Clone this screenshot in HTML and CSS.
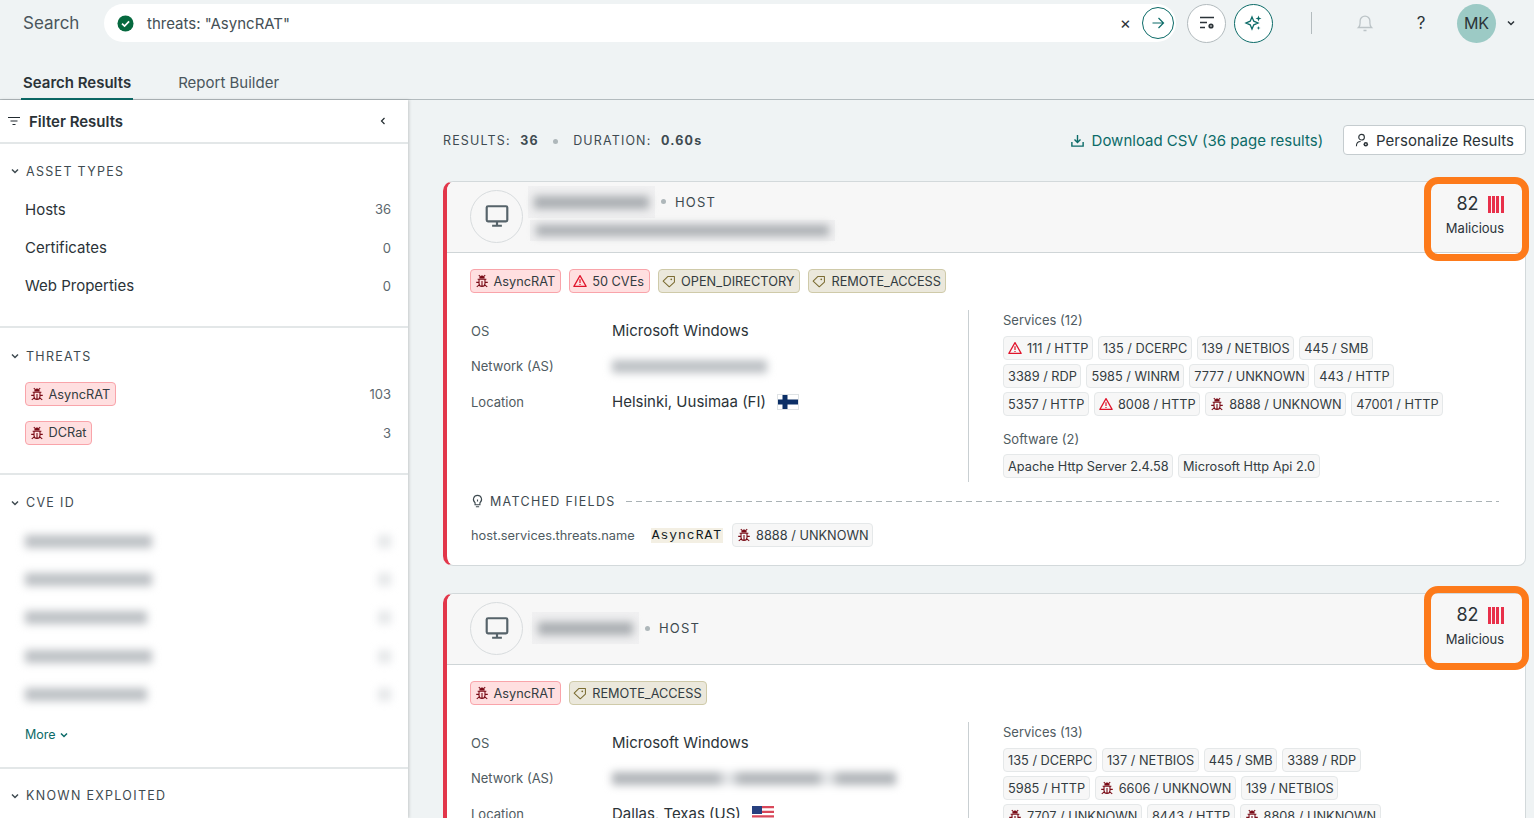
FILE: index.html
```html
<!DOCTYPE html>
<html lang="en">
<head>
  <meta charset="UTF-8">
  <title>Search Results</title>
  <link rel="stylesheet" href="styles.css">
</head>
<body>

  <!-- Shared icons -->
  <svg class="sprite" xmlns="http://www.w3.org/2000/svg">
    <symbol id="bug" viewBox="0 0 16 16">
      <path d="M5.3 4.8a2.7 2.7 0 0 1 5.4 0z" fill="currentColor" stroke="currentColor" stroke-width=".8"/>
      <path d="M3 6h10M4.6 6v4.8a3.4 3.4 0 0 0 6.8 0V6M8 8v6M5.6 2.8 4.4 1.4M10.4 2.8l1.2-1.4M1.4 9.6h3.2M14.6 9.6h-3.2M2 14.8l2.9-2.4M14 14.8l-2.9-2.4" fill="none" stroke="currentColor" stroke-width="1.25"/>
    </symbol>
    <symbol id="warn" viewBox="0 0 16 16">
      <path d="M8 1.8 15 14.2H1z" fill="none" stroke="currentColor" stroke-width="1.4" stroke-linejoin="round"/>
      <path d="M8 6v4.2M8 11.3v1.4" fill="none" stroke="currentColor" stroke-width="1.4"/>
    </symbol>
    <symbol id="tag" viewBox="0 0 16 16">
      <path d="M1.3 8.2 6.8 2.8h7.4v6.4l-5.9 5.4z" fill="none" stroke="currentColor" stroke-width="1.2" stroke-linejoin="round"/>
      <circle cx="10.6" cy="6" r="1" fill="currentColor"/>
    </symbol>
    <symbol id="monitor" viewBox="0 0 24 24">
      <rect x="2.5" y="3" width="19" height="14" rx="1.2" fill="none" stroke="currentColor" stroke-width="2"/>
      <path d="M12 17v4M7.5 21h9" fill="none" stroke="currentColor" stroke-width="2"/>
    </symbol>
    <symbol id="chev" viewBox="0 0 10 10">
      <path d="M2 3.5 5 6.5 8 3.5" fill="none" stroke="currentColor" stroke-width="1.5"/>
    </symbol>
  </svg>

  <header class="topbar">
    <div class="search-row">
      <span class="search-label">Search</span>
      <div class="search-box">
        <svg class="check" viewBox="0 0 18 18"><circle cx="9" cy="9" r="8.5" fill="#06693f"/><path d="M5.3 9.2 8 11.8l4.8-5" fill="none" stroke="#fff" stroke-width="1.8"/></svg>
        <span class="query">threats: "AsyncRAT"</span>
        <span class="clear">×</span>
        <span class="go-btn">
          <svg width="16" height="16" viewBox="0 0 16 16"><path d="M2.5 8h11M8.5 3l5 5-5 5" fill="none" stroke="currentColor" stroke-width="1.2"/></svg>
        </span>
      </div>
      <span class="round-btn grey">
        <svg width="20" height="20" viewBox="0 0 20 20"><path d="M3 4.5h14M3 9.5h7M3 14.5h5" fill="none" stroke="#2b3338" stroke-width="1.3"/><circle cx="14" cy="13" r="2.6" fill="#2b3338"/><circle cx="14" cy="13" r="0.8" fill="#fff"/></svg>
      </span>
      <span class="round-btn teal">
        <svg width="20" height="20" viewBox="0 0 20 20" fill="none" stroke="#0c6b68" stroke-width="1.3"><path d="M8 5.5 9.8 9.7 14 11.5 9.8 13.3 8 17.5 6.2 13.3 2 11.5 6.2 9.7z" transform="translate(0 -1.5)"/><path d="M14.5 2.5 15.3 4.7 17.5 5.5 15.3 6.3 14.5 8.5 13.7 6.3 11.5 5.5 13.7 4.7zM14.5 13 15 14.5 16.5 15 15 15.5 14.5 17 14 15.5 12.5 15 14 14.5z" fill="#0c6b68" stroke="none"/></svg>
      </span>
      <span class="top-divider"></span>
      <svg class="bell" width="18" height="20" viewBox="0 0 18 20"><path d="M2.5 14.5c1.2-1 1.6-2.2 1.6-4.5V8a4.9 4.9 0 0 1 9.8 0v2c0 2.3.4 3.5 1.6 4.5zM7.5 17.5h3" fill="none" stroke="#bcc4c7" stroke-width="1.3"/></svg>
      <span class="help">?</span>
      <span class="avatar">MK</span>
      <svg class="avatar-chev" width="10" height="10"><use href="#chev"/></svg>
    </div>
    <nav class="tabs">
      <a class="tab active">Search Results</a>
      <a class="tab">Report Builder</a>
    </nav>
  </header>

  <div class="layout">
    <!-- Filters -->
    <aside class="sidebar">
      <div class="filter-head">
        <svg width="12" height="10" viewBox="0 0 12 10"><path d="M0 1.5h12M2.5 5h7M4.5 8.5h3" fill="none" stroke="#222b30" stroke-width="1.2"/></svg>
        <strong>Filter Results</strong>
        <svg class="collapse" width="10" height="10" viewBox="0 0 10 10"><path d="M6.5 2 3.5 5l3 3" fill="none" stroke="#222b30" stroke-width="1.2"/></svg>
      </div>

      <section class="filter-group">
        <h4><svg width="10" height="10"><use href="#chev"/></svg>ASSET TYPES</h4>
        <div class="filter-row"><span>Hosts</span><span class="count">36</span></div>
        <div class="filter-row"><span>Certificates</span><span class="count">0</span></div>
        <div class="filter-row"><span>Web Properties</span><span class="count">0</span></div>
      </section>

      <section class="filter-group">
        <h4><svg width="10" height="10"><use href="#chev"/></svg>THREATS</h4>
        <div class="filter-row"><span class="tag red"><svg class="ico bug-ico"><use href="#bug"/></svg>AsyncRAT</span><span class="count">103</span></div>
        <div class="filter-row"><span class="tag red"><svg class="ico bug-ico"><use href="#bug"/></svg>DCRat</span><span class="count">3</span></div>
      </section>

      <section class="filter-group cve">
        <h4><svg width="10" height="10"><use href="#chev"/></svg>CVE ID</h4>
        <div class="filter-row"><span class="smudge w1"></span><span class="smudge faint"></span></div>
        <div class="filter-row"><span class="smudge w1"></span><span class="smudge faint"></span></div>
        <div class="filter-row"><span class="smudge w2"></span><span class="smudge faint"></span></div>
        <div class="filter-row"><span class="smudge w1"></span><span class="smudge faint"></span></div>
        <div class="filter-row"><span class="smudge w2"></span><span class="smudge faint"></span></div>
        <a class="more">More <svg width="10" height="10"><use href="#chev"/></svg></a>
      </section>

      <section class="filter-group">
        <h4><svg width="10" height="10"><use href="#chev"/></svg>KNOWN EXPLOITED</h4>
      </section>
    </aside>

    <main class="results">
      <div class="results-bar">
        <div class="stats">
          RESULTS: <b>36</b> <i class="dot"></i> DURATION: <b>0.60s</b>
        </div>
        <a class="download">
          <svg width="15" height="15" viewBox="0 0 16 16"><path d="M8 2v8M4.8 7 8 10.2 11.2 7M2 9.5V14h12V9.5" fill="none" stroke="currentColor" stroke-width="1.5"/></svg>
          Download CSV (36 page results)
        </a>
        <span class="personalize">
          <svg width="15" height="15" viewBox="0 0 16 16"><circle cx="7" cy="4.5" r="3" fill="none" stroke="#2b3338" stroke-width="1.2"/><path d="M1.5 14c0-3 2-5 4.5-5" fill="none" stroke="#2b3338" stroke-width="1.2"/><circle cx="11.5" cy="12" r="2.4" fill="#2b3338"/><circle cx="11.5" cy="12" r=".8" fill="#fff"/></svg>
          Personalize Results
        </span>
      </div>

      <!-- First host -->
      <article class="card">
        <div class="card-head">
          <span class="host-icon"><svg width="26" height="26"><use href="#monitor"/></svg></span>
          <div class="host-title two-lines">
            <div class="title-line">
              <span class="blur-box b1"><span class="smudge"></span></span>
              <i class="dot"></i><span class="kind">HOST</span>
            </div>
            <span class="blur-box b2"><span class="smudge"></span></span>
          </div>
          <div class="score">
            <div class="score-top">82 <span class="bars"><i></i><i></i><i></i><i></i></span></div>
            <div class="score-label">Malicious</div>
          </div>
        </div>
        <div class="card-body">
          <div class="tags">
            <span class="tag red"><svg class="ico bug-ico"><use href="#bug"/></svg>AsyncRAT</span>
            <span class="tag red"><svg class="ico warn-ico"><use href="#warn"/></svg>50 CVEs</span>
            <span class="tag olive"><svg class="ico tag-ico"><use href="#tag"/></svg>OPEN_DIRECTORY</span>
            <span class="tag olive"><svg class="ico tag-ico"><use href="#tag"/></svg>REMOTE_ACCESS</span>
          </div>
          <div class="details">
            <div class="facts">
              <div class="fact"><span class="fact-name">OS</span><span class="fact-value">Microsoft Windows</span></div>
              <div class="fact"><span class="fact-name">Network (AS)</span><span class="smudge net1"></span></div>
              <div class="fact"><span class="fact-name">Location</span><span class="fact-value">Helsinki, Uusimaa (FI)</span>
                <svg class="flag" viewBox="0 0 22 16"><rect width="22" height="16" fill="#fff"/><path d="M0 8h22M8 0v16" stroke="#0b2e66" stroke-width="5"/><rect x=".5" y=".5" width="21" height="15" fill="none" stroke="#dfe3e5"/></svg>
              </div>
            </div>
            <div class="services">
              <div class="svc-title">Services (12)</div>
              <div class="chips">
                <div class="chip-row">
                  <span class="tag"><svg class="ico warn-ico"><use href="#warn"/></svg>111 / HTTP</span>
                  <span class="tag">135 / DCERPC</span>
                  <span class="tag">139 / NETBIOS</span>
                  <span class="tag">445 / SMB</span>
                </div>
                <div class="chip-row">
                  <span class="tag">3389 / RDP</span>
                  <span class="tag">5985 / WINRM</span>
                  <span class="tag">7777 / UNKNOWN</span>
                  <span class="tag">443 / HTTP</span>
                </div>
                <div class="chip-row">
                  <span class="tag">5357 / HTTP</span>
                  <span class="tag"><svg class="ico warn-ico"><use href="#warn"/></svg>8008 / HTTP</span>
                  <span class="tag"><svg class="ico bug-ico"><use href="#bug"/></svg>8888 / UNKNOWN</span>
                  <span class="tag">47001 / HTTP</span>
                </div>
              </div>
              <div class="svc-title second">Software (2)</div>
              <div class="chips">
                <div class="chip-row">
                  <span class="tag">Apache Http Server 2.4.58</span>
                  <span class="tag">Microsoft Http Api 2.0</span>
                </div>
              </div>
            </div>
          </div>
          <div class="matched-title">
            <svg width="13" height="15" viewBox="0 0 16 18"><path d="M8 1.5a5 5 0 0 0-3 9V13h6v-2.5a5 5 0 0 0-3-9zM6 15.5h4M8 9V6.5" fill="none" stroke="#3e4a50" stroke-width="1.4"/></svg>
            <span>MATCHED FIELDS</span>
            <span class="dashes"></span>
          </div>
          <div class="matched-row">
            <span class="field">host.services.threats.name</span>
            <code class="hit">AsyncRAT</code>
            <span class="tag"><svg class="ico bug-ico"><use href="#bug"/></svg>8888 / UNKNOWN</span>
          </div>
        </div>
      </article>

      <!-- Second host -->
      <article class="card">
        <div class="card-head">
          <span class="host-icon"><svg width="26" height="26"><use href="#monitor"/></svg></span>
          <div class="host-title">
            <div class="title-line">
              <span class="blur-box b3"><span class="smudge"></span></span>
              <i class="dot"></i><span class="kind">HOST</span>
            </div>
          </div>
          <div class="score">
            <div class="score-top">82 <span class="bars"><i></i><i></i><i></i><i></i></span></div>
            <div class="score-label">Malicious</div>
          </div>
        </div>
        <div class="card-body">
          <div class="tags">
            <span class="tag red"><svg class="ico bug-ico"><use href="#bug"/></svg>AsyncRAT</span>
            <span class="tag olive"><svg class="ico tag-ico"><use href="#tag"/></svg>REMOTE_ACCESS</span>
          </div>
          <div class="details">
            <div class="facts">
              <div class="fact"><span class="fact-name">OS</span><span class="fact-value">Microsoft Windows</span></div>
              <div class="fact"><span class="fact-name">Network (AS)</span><span class="smudge net2"></span></div>
              <div class="fact"><span class="fact-name">Location</span><span class="fact-value">Dallas, Texas (US)</span>
                <svg class="flag" viewBox="0 0 22 16"><rect width="22" height="16" fill="#fff"/><path d="M0 1.2h22M0 5.8h22M0 10.4h22M0 15h22" stroke="#d9485a" stroke-width="2.2"/><rect width="10" height="8" fill="#27407f"/></svg>
              </div>
            </div>
            <div class="services">
              <div class="svc-title">Services (13)</div>
              <div class="chips">
                <div class="chip-row">
                  <span class="tag">135 / DCERPC</span>
                  <span class="tag">137 / NETBIOS</span>
                  <span class="tag">445 / SMB</span>
                  <span class="tag">3389 / RDP</span>
                </div>
                <div class="chip-row">
                  <span class="tag">5985 / HTTP</span>
                  <span class="tag"><svg class="ico bug-ico"><use href="#bug"/></svg>6606 / UNKNOWN</span>
                  <span class="tag">139 / NETBIOS</span>
                </div>
                <div class="chip-row">
                  <span class="tag"><svg class="ico bug-ico"><use href="#bug"/></svg>7707 / UNKNOWN</span>
                  <span class="tag">8443 / HTTP</span>
                  <span class="tag"><svg class="ico bug-ico"><use href="#bug"/></svg>8808 / UNKNOWN</span>
                </div>
              </div>
            </div>
          </div>
        </div>
      </article>
    </main>
  </div>

</body>
</html>
```

FILE: styles.css
```css
* {
  box-sizing: border-box;
}

body {
  margin: 0;
  height: 100vh;
  overflow: hidden;
  display: flex;
  flex-direction: column;
  font-family: Inter, "Liberation Sans", sans-serif;
  font-size: 13px;
  color: #2b3338;
  background: #eff3f4;
}

.sprite {
  display: none;
}

/* Top bar */
.topbar {
  height: 100px;
  flex: none;
  border-bottom: 1px solid #b3bbbe;
}

.search-row {
  display: flex;
  align-items: center;
  padding: 4px 0 0 23px;
  height: 42px;
}

.search-label {
  width: 81px;
  font-size: 17px;
  color: #4a565c;
}

.search-box {
  display: flex;
  align-items: center;
  width: 1072px;
  height: 38px;
  padding: 0 2px 0 13px;
  background: #fff;
  border-radius: 19px;
}

.check {
  width: 17px;
  height: 17px;
}

.query {
  flex: 1;
  margin-left: 13px;
  font-size: 15px;
  color: #445056;
}

.clear {
  margin-right: 11px;
  font-size: 17px;
  color: #2b3338;
}

.go-btn {
  display: flex;
  align-items: center;
  justify-content: center;
  width: 32px;
  height: 32px;
  color: #0c6b68;
  border: 1px solid #0c6b68;
  border-radius: 50%;
}

.round-btn {
  display: flex;
  align-items: center;
  justify-content: center;
  width: 39px;
  height: 39px;
  background: #fff;
  border-radius: 50%;
}

.round-btn.grey {
  margin-left: 11px;
  border: 1px solid #b3bbbe;
}

.round-btn.teal {
  margin-left: 8px;
  border: 1px solid #0c6b68;
}

.top-divider {
  width: 1px;
  height: 22px;
  margin-left: 38px;
  background: #b3bbbe;
}

.bell {
  margin-left: 44px;
}

.help {
  width: 14px;
  margin-left: 40px;
  font-size: 17px;
  text-align: center;
}

.avatar {
  display: flex;
  align-items: center;
  justify-content: center;
  width: 39px;
  height: 39px;
  margin-left: 29px;
  font-size: 16px;
  background: #9ccac5;
  border-radius: 50%;
}

.avatar-chev {
  margin-left: 10px;
}

.tabs {
  display: flex;
  gap: 43px;
  margin-top: 20px;
  padding-left: 21px;
}

.tab {
  padding: 9px 2px 5px;
  height: 38px;
  font-size: 15px;
  line-height: 24px;
  color: #4a565c;
}

.tab.active {
  font-weight: 600;
  color: #2b3338;
  border-bottom: 2px solid #0c6b68;
}

.layout {
  display: flex;
  flex: 1;
  min-height: 0;
}

/* Sidebar */
.sidebar {
  width: 408px;
  flex: none;
  background: #fff;
  box-shadow: 1px 0 3px rgba(0, 0, 0, 0.18);
  z-index: 1;
}

.filter-head {
  display: flex;
  align-items: center;
  height: 44px;
  padding: 0 20px 0 8px;
  font-size: 15px;
  border-bottom: 2px solid #e3e7e8;
}

.filter-head strong {
  flex: 1;
  margin-left: 9px;
  font-weight: 600;
}

.filter-group {
  padding: 18px 17px 21px 0;
  border-bottom: 2px solid #e3e7e8;
}

.filter-head + .filter-group {
  padding-top: 17px;
}

.filter-group:last-child {
  padding-top: 17px;
}

.filter-group h4 {
  display: flex;
  align-items: center;
  gap: 6px;
  height: 20px;
  margin: 0 0 9px 10px;
  font-size: 12.5px;
  font-weight: 400;
  letter-spacing: 1.3px;
  color: #3e4a50;
}

.filter-row {
  display: flex;
  align-items: center;
  justify-content: space-between;
  height: 38.4px;
  padding-left: 25px;
  font-size: 15px;
}

.count {
  font-size: 13px;
  color: #5c686e;
}

.more {
  display: flex;
  align-items: center;
  gap: 3px;
  height: 20px;
  margin: 11px 0 1px 25px;
  font-size: 12.5px;
  color: #0c6b68;
}

/* Blurred values */
.smudge {
  display: block;
  height: 13px;
  background: #bcc0c4;
  filter: blur(4.5px);
}

.smudge.w1 {
  width: 127px;
}

.smudge.w2 {
  width: 122px;
}

.smudge.faint {
  width: 13px;
  background: #e4e6e8;
}

.smudge.net1 {
  width: 155px;
}

.smudge.net2 {
  width: 284px;
  background: linear-gradient(90deg, #b0b4b8 0 37%, #e4e6e8 40% 42%, #b0b4b8 45% 72%, #e4e6e8 75% 77%, #b0b4b8 80%);
}

.blur-box {
  display: block;
  padding: 10px 6px;
  background: #f0f0f1;
}

.blur-box .smudge {
  background: #a9adb1;
}

.blur-box.b1 {
  width: 127px;
  height: 32px;
}

.blur-box.b2 {
  width: 305px;
  height: 21px;
  margin: 2px 0 0 2px;
  padding: 5px 6px;
}

.blur-box.b2 .smudge {
  height: 11px;
}

.blur-box.b3 {
  width: 107px;
  height: 32px;
  margin-left: 4px;
}

/* Tags */
.ico {
  width: 14px;
  height: 14px;
  flex: none;
  margin-right: 5px;
}

.bug-ico {
  color: #7a0c17;
}

.warn-ico {
  color: #e0142b;
}

.tag-ico {
  color: #7b6c32;
}

.tag {
  display: inline-flex;
  align-items: center;
  height: 24px;
  padding: 0 3.5px 0 4px;
  font-size: 12.75px;
  white-space: nowrap;
  color: #333c41;
  background: #f7f7f7;
  border: 1px solid #e5e8e9;
  border-radius: 4px;
}

.tag.red {
  padding: 0 4.5px 0 3.5px;
  background: #ffdfe0;
  border-color: #f9a4aa;
}

.tag.olive {
  padding: 0 4.5px 0 3.5px;
  background: #ebe8dc;
  border-color: #cfcaa9;
}

/* Results */
.results {
  flex: 1;
  min-width: 0;
  padding: 25px 8px 0 35px;
  overflow: hidden;
}

.results-bar {
  display: flex;
  align-items: center;
  height: 30px;
  margin-bottom: 26px;
}

.stats {
  flex: 1;
  font-size: 12.5px;
  letter-spacing: 1.15px;
  color: #3e4a50;
}

.stats b {
  font-weight: 700;
  margin-left: 5px;
}

.dot {
  display: inline-block;
  width: 5px;
  height: 5px;
  margin: 0 10px;
  vertical-align: middle;
  background: #aeb7ba;
  border-radius: 50%;
}

.download {
  display: flex;
  align-items: center;
  gap: 7px;
  margin-right: 20px;
  font-size: 15px;
  color: #0c6b68;
}

.personalize {
  display: flex;
  align-items: center;
  gap: 6px;
  height: 30px;
  padding: 0 11px;
  font-size: 15px;
  background: #fff;
  border: 1px solid #c5cccf;
  border-radius: 4px;
}

.card {
  margin-bottom: 27px;
  background: #fff;
  border: 1px solid #d3d9db;
  border-left: 4px solid #e2364a;
  border-radius: 10px 8px 8px 10px;
}

.card-head {
  position: relative;
  display: flex;
  align-items: center;
  height: 70.5px;
  padding: 0 0 1.5px 23px;
  background: #f7f7f7;
  border-bottom: 1px solid #cfd5d7;
  border-radius: 8px 8px 0 0;
}

.host-icon {
  display: flex;
  align-items: center;
  justify-content: center;
  width: 53px;
  height: 53px;
  flex: none;
  color: #56636a;
  border: 1px solid #d8dcde;
  border-radius: 50%;
}

.host-title {
  margin-left: 5px;
}

.host-title.two-lines {
  margin-top: -6px;
}

.title-line {
  display: flex;
  align-items: center;
}

.title-line .dot {
  margin: 0 9px 0 6px;
}

.kind {
  font-size: 13px;
  letter-spacing: 1.2px;
  color: #3e4a50;
}

/* Orange frame drawn over the head of the card */
.score {
  position: absolute;
  top: -5px;
  right: -4px;
  width: 105px;
  height: 84px;
  padding-top: 8px;
  text-align: center;
  border: 7px solid #fd7a1a;
  border-radius: 14px;
}

.card + .card .score {
  top: -8px;
  padding-top: 10px;
}

.score-top {
  display: flex;
  align-items: center;
  justify-content: center;
  gap: 9px;
  padding-left: 7px;
  font-size: 18px;
  line-height: 24px;
}

.bars {
  display: flex;
  gap: 1.3px;
}

.bars i {
  width: 3px;
  height: 17px;
  background: #e8304a;
}

.score-label {
  margin-top: 3px;
  padding-right: 3px;
  font-size: 13px;
  line-height: 18px;
}

.card-body {
  padding: 16.5px 26px 18px 23px;
}

.tags {
  display: flex;
  gap: 8px;
}

.details {
  display: flex;
  margin-top: 17px;
}

.facts {
  width: 498px;
  flex: none;
  padding-top: 3px;
}

.fact {
  display: flex;
  align-items: center;
  height: 35.5px;
}

.fact-name {
  width: 142px;
  flex: none;
  padding-left: 1px;
  color: #4f5b61;
}

.fact-value {
  font-size: 15px;
  color: #2b3338;
}

.flag {
  width: 22px;
  height: 16px;
  margin-left: 11px;
}

.services {
  flex: 1;
  padding: 0 0 4px 34px;
  border-left: 1px solid #c9cfd2;
}

.svc-title {
  height: 21px;
  line-height: 21px;
  color: #4f5b61;
}

.svc-title.second {
  height: 20px;
  margin-top: 13px;
}

.chips {
  display: flex;
  flex-direction: column;
  gap: 4px;
  margin-top: 5px;
}

.chip-row {
  display: flex;
  gap: 5px;
}

.matched-title {
  display: flex;
  align-items: center;
  height: 20px;
  margin-top: 9px;
  padding-left: 1px;
  font-size: 12.5px;
  letter-spacing: 1.3px;
  color: #3e4a50;
}

.matched-title span:first-of-type {
  margin-left: 6px;
}

.dashes {
  flex: 1;
  height: 1px;
  margin-left: 10px;
  background: repeating-linear-gradient(90deg, #aab2b5 0 6px, transparent 6px 10px);
}

.matched-row {
  display: flex;
  align-items: center;
  margin-top: 12px;
  padding-left: 1px;
}

.field {
  font-size: 12.8px;
  color: #4f5b61;
}

.hit {
  margin: 0 9px 0 16px;
  padding: 0 1px;
  font-family: "Liberation Mono", monospace;
  font-size: 13px;
  letter-spacing: 1px;
  color: #111a1e;
  background: #f3efe3;
}
```
